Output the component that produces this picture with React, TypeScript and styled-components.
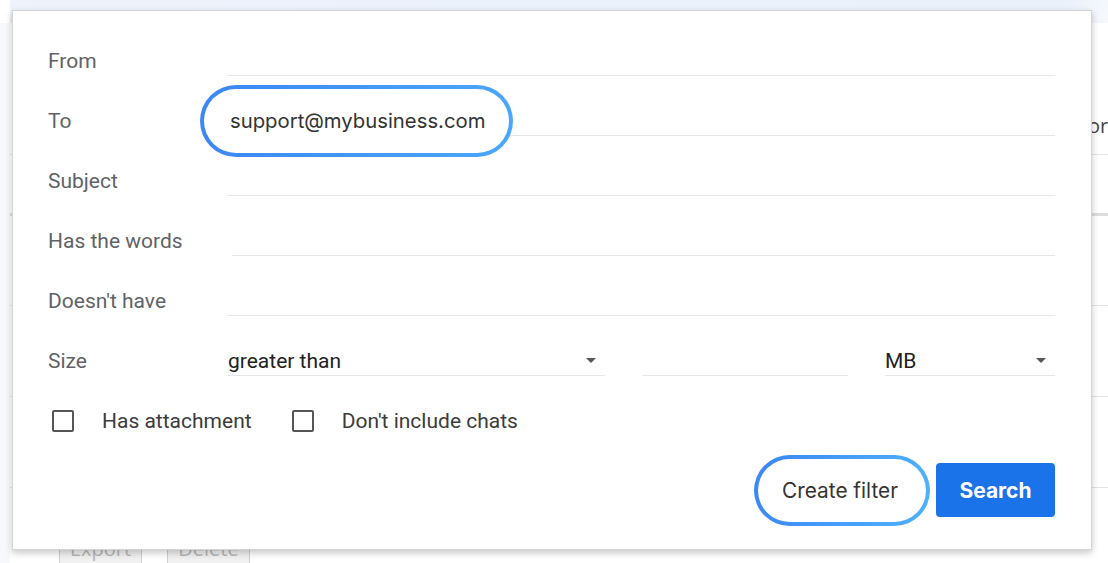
import React from 'react'
import styled, { createGlobalStyle } from 'styled-components'

const GlobalStyle = createGlobalStyle`
  html, body {
    margin: 0;
    padding: 0;
    background: #ffffff;
    font-family: Roboto, "Liberation Sans", Arial, sans-serif;
  }
  * { box-sizing: border-box; }
`

const Page = styled.div`
  position: relative;
  width: 1108px;
  height: 563px;
  overflow: hidden;
  background: #ffffff;
`

const Backdrop = styled.div`
  display: flex;
  flex-direction: column;
  height: 100%;
`

const TopBand = styled.div`
  height: 23px;
  flex-shrink: 0;
  margin-left: 10px;
  background: linear-gradient(100deg, #edf2fb 0%, #eaf1fb 96%, #f6f8fc 100%);
`

const BackBody = styled.div`
  flex: 1;
  display: flex;
`

const LeftRail = styled.div`
  width: 10px;
  flex-shrink: 0;
  background: #f6f8fc;
`

const BackMain = styled.div`
  flex: 1;
  display: flex;
  flex-direction: column;
  overflow: hidden;
`

const HeaderRow = styled.div`
  height: 132px;
  display: flex;
  align-items: flex-end;
  padding: 0 0 15px 1078px;
  border-bottom: 1px solid #e6e6e6;
  font-family: "Open Sans", sans-serif;
  font-size: 20px;
  color: #444;
  white-space: nowrap;
`

const ListRow = styled.div<{ $strong?: boolean; $h: number }>`
  height: ${p => p.$h}px;
  flex-shrink: 0;
  border-bottom: ${p => (p.$strong ? '3px solid #dcdcdc' : '1px solid #e4e4e4')};
`

const Toolbar = styled.div`
  display: flex;
  gap: 25px;
  padding: 46px 0 0 49px;
`

const GhostButton = styled.div`
  width: 83px;
  height: 34px;
  display: flex;
  align-items: center;
  justify-content: center;
  background: #f1f1f1;
  border: 1px solid #d0d0d0;
  color: #b8b8b8;
  font-family: "Open Sans", sans-serif;
  font-size: 20px;
  padding-bottom: 6px;
`

const Dialog = styled.div`
  position: absolute;
  left: 12px;
  top: 10px;
  width: 1080px;
  height: 540px;
  background: #ffffff;
  border: 1px solid #d4d4d4;
  box-shadow: 0 3px 7px rgba(0, 0, 0, 0.22);
  padding: 20px 36px 0 35px;
  display: flex;
  flex-direction: column;
`

const Row = styled.div`
  height: 60px;
  display: grid;
  grid-template-columns: 180px 1fr;
  align-items: center;
`

const Label = styled.div`
  font-size: 21px;
  color: #5f6368;
  line-height: 28px;
`

const Field = styled.div<{ $indent?: number }>`
  position: relative;
  height: 29px;
  margin-left: ${p => p.$indent || 0}px;
  border-bottom: 1px solid #e6e6e6;
  font-size: 21px;
  line-height: 28px;
  color: #222;
`

const Highlight = styled.div`
  position: absolute;
  left: -28px;
  top: -22px;
  height: 72px;
  padding: 0 24px 0 26px;
  display: flex;
  align-items: center;
  border: 4px solid transparent;
  border-radius: 36px;
  background: linear-gradient(#fff, #fff) padding-box,
    linear-gradient(100deg, #3b86f6 0%, #4aa8fb 100%) border-box;
  font-family: Inter, Roboto, sans-serif;
  font-size: 20.3px;
  color: #333;
  white-space: nowrap;
`

const SizeFields = styled.div`
  display: flex;
  gap: 37px;
`

const Select = styled.div<{ $w: number }>`
  width: ${p => p.$w}px;
  height: 29px;
  display: flex;
  align-items: center;
  justify-content: space-between;
  padding-right: 9px;
  border-bottom: 1px solid #e6e6e6;
  font-size: 21px;
  color: #222;
`

const Caret = styled.span`
  width: 0;
  height: 0;
  border-left: 5px solid transparent;
  border-right: 5px solid transparent;
  border-top: 5px solid #555;
`

const CheckRow = styled.div`
  height: 60px;
  display: flex;
  align-items: center;
  padding-left: 4px;
`

const CheckItem = styled.label`
  display: flex;
  align-items: center;
  gap: 28px;
  margin-right: 40px;
  font-size: 21px;
  color: #3c3c3c;
`

const Box = styled.span`
  width: 22px;
  height: 22px;
  border: 2px solid #555;
  border-radius: 2px;
`

const Actions = styled.div`
  height: 78px;
  display: flex;
  align-items: center;
  justify-content: flex-end;
  gap: 6px;
`

const FilterButton = styled.button`
  height: 71px;
  padding: 0 28px 0 24px;
  border: 4px solid transparent;
  border-radius: 36px;
  background: linear-gradient(#fff, #fff) padding-box,
    linear-gradient(100deg, #3b86f6 0%, #4fb3fc 100%) border-box;
  font-family: Inter, Roboto, sans-serif;
  font-size: 20.8px;
  color: #333;
  cursor: pointer;
`

const SearchButton = styled.button`
  width: 119px;
  height: 54px;
  border: none;
  border-radius: 4px;
  background: #1a73e8;
  color: #ffffff;
  font-family: Inter, Roboto, sans-serif;
  font-size: 21px;
  font-weight: 700;
  cursor: pointer;
`

const textRows = [
  { label: 'From' },
  { label: 'To', value: 'support@mybusiness.com' },
  { label: 'Subject' },
  { label: 'Has the words', indent: 4 },
  { label: "Doesn't have" },
]

export default function App() {
  return (
    <Page>
      <GlobalStyle />
      <Backdrop>
        <TopBand />
        <BackBody>
          <LeftRail />
          <BackMain>
            <HeaderRow>or</HeaderRow>
            <ListRow $h={61} $strong />
            <ListRow $h={90} />
            <ListRow $h={91} />
            <ListRow $h={91} />
            <Toolbar>
              <GhostButton>Export</GhostButton>
              <GhostButton>Delete</GhostButton>
            </Toolbar>
          </BackMain>
        </BackBody>
      </Backdrop>

      <Dialog>
        {textRows.map(r => (
          <Row key={r.label}>
            <Label>{r.label}</Label>
            <Field $indent={r.indent}>
              {r.value && <Highlight>{r.value}</Highlight>}
            </Field>
          </Row>
        ))}
        <Row>
          <Label>Size</Label>
          <SizeFields>
            <Select $w={377}>
              greater than
              <Caret />
            </Select>
            <Select $w={206} />
            <Select $w={170}>
              MB
              <Caret />
            </Select>
          </SizeFields>
        </Row>
        <CheckRow>
          <CheckItem>
            <Box />
            Has attachment
          </CheckItem>
          <CheckItem>
            <Box />
            Don't include chats
          </CheckItem>
        </CheckRow>
        <Actions>
          <FilterButton>Create filter</FilterButton>
          <SearchButton>Search</SearchButton>
        </Actions>
      </Dialog>
    </Page>
  )
}
